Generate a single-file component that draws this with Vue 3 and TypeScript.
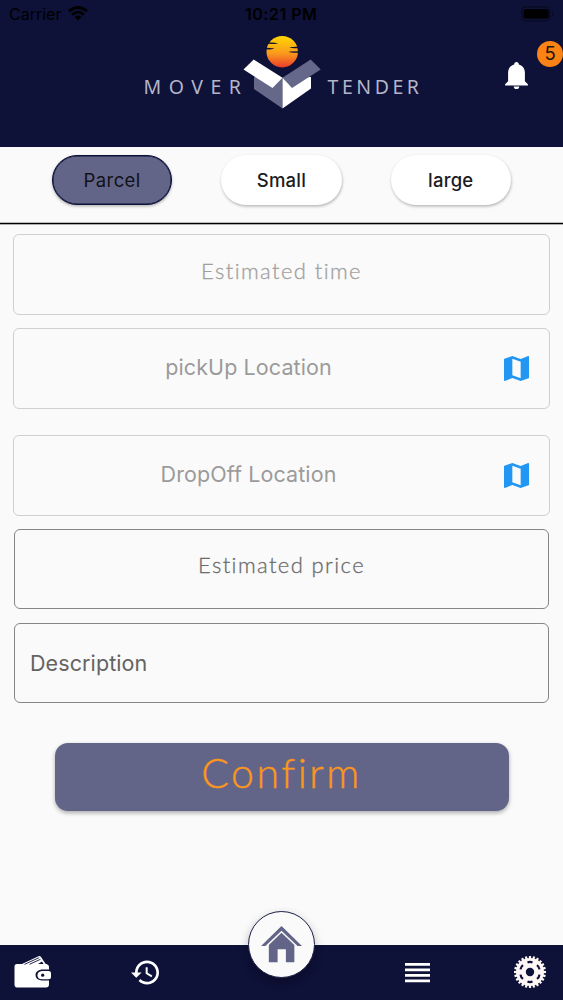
<script setup lang="ts">
import { ref } from 'vue'

interface Field {
  label: string
  kind: string
  map?: boolean
}

const sizes: string[] = ['Parcel', 'Small', 'large']
const selected = ref<string>('Parcel')

const fields: Field[] = [
  { label: 'Estimated time', kind: 'time' },
  { label: 'pickUp Location', kind: 'pickup', map: true },
  { label: 'DropOff Location', kind: 'dropoff', map: true },
  { label: 'Estimated price', kind: 'price' },
  { label: 'Description', kind: 'description' },
]
const notifications = ref<number>(5)
const teeth: number[] = Array.from({ length: 24 }, (_, i) => i * 15)
const slots: number[] = [0, 60, 120, 180, 240, 300]
</script>

<template>
  <div class="screen">
    <header class="header">
      <div class="status">
        <span class="carrier">Carrier</span>
        <svg class="wifi" width="20" height="15" viewBox="0 0 20 15">
          <g fill="none" stroke="#000" stroke-width="2.7">
            <path d="M1 5.2Q10-2.2 19 5.2" />
            <path d="M4.1 8.7Q10 3.6 15.9 8.7" />
          </g>
          <path d="M6.7 11Q10 8.2 13.3 11L10 14.6Z" />
        </svg>
        <span class="clock">10:21 PM</span>
        <svg class="battery" width="34" height="16" viewBox="0 0 34 16">
          <rect x=".8" y=".8" width="28" height="14" rx="4" fill="none" stroke="#090b22" stroke-width="1.2" />
          <rect x="2.6" y="2.9" width="25" height="9.8" rx="2.4" />
          <path d="M31 5.6q1.6.4 1.6 2.3T31 10.2z" fill="#090b22" />
        </svg>
      </div>
      <svg class="logo" width="280" height="80" viewBox="142 32 280 80">
        <defs>
          <linearGradient id="sun" x1="0" y1="0" x2="0" y2="1">
            <stop offset="0" stop-color="#ffd800" />
            <stop offset=".55" stop-color="#fa9a1c" />
            <stop offset="1" stop-color="#ea3c2c" />
          </linearGradient>
        </defs>
        <text x="143.500" y="93.800" textLength="97.500">MOVER</text>
        <text x="327.500" y="93.800" textLength="91.500">TENDER</text>
        <circle cx="282.200" cy="51.700" r="15.700" fill="url(#sun)" />
        <g fill="#0e1138">
          <path d="M267.200 42.300L275 42.800l3.200.7-4.200.6-8.500-.3Z" />
          <path d="M266 47.800L273 48.200l1.300.6-4.500.6-5-.2Z" />
          <path d="M298 46.500L290.500 47.200l-1 .5 5 .5h5Z" />
          <path d="M298.500 51.200L290 51.500l-1.300.6 4 .6h6Z" />
        </g>
        <path fill="#656888" d="M254 77L282.500 77.500V108.500L254 89Z" />
        <path fill="#fff" d="M282.500 78L311 77V88.500L282.500 108.500Z" />
        <path fill="#fff" d="M253.700 59.500L282.500 77.800L272.500 88L243.500 69.500Z" />
        <path fill="#656888" d="M310.700 59.500L320.700 69.500L292 88L282.500 77.800Z" />
      </svg>
      <svg class="bell" width="23" height="28" viewBox="0 0 23 28">
        <path fill="#fff" d="M11.500 0c1.500 0 2.300 1 2.300 2.500 4 1 6.100 4.300 6.100 8.600v8.200l3 2.900v1.200H.1v-1.200l3-2.900v-8.200C3.100 6.800 5.200 3.500 9.200 2.500 9.200 1 10 0 11.500 0zM8.700 24.400h5.600c0 1.600-1.200 2.700-2.800 2.700s-2.800-1.100-2.800-2.700z" />
      </svg>
      <span class="badge">{{ notifications }}</span>
    </header>

    <div class="sizes">
      <button
        v-for="size in sizes"
        :key="size"
        class="chip"
        :class="{ active: size === selected }"
        @click="selected = size"
      >{{ size }}</button>
    </div>

    <main class="form">
      <div v-for="field in fields" :key="field.kind" class="field" :class="field.kind">
        <span class="label">{{ field.label }}</span>
        <svg v-if="field.map" class="map" width="25" height="25" viewBox="3 3 18 18">
          <path fill="#2196f3" d="M20.500 3l-.16.030L15 5.100 9 3 3.360 4.900c-.21.070-.36.250-.36.480V20.500c0 .28.220.5.500.5l.16-.030L9 18.900l6 2.100 5.640-1.900c.21-.070.360-.25.360-.48V3.500c0-.28-.22-.5-.5-.5zM15 19l-6-2.110V5l6 2.110V19z" />
        </svg>
      </div>
      <button class="confirm"><span>Confirm</span></button>
    </main>

    <nav class="nav">
      <svg class="wallet" width="38" height="34" viewBox="0 0 38 34">
        <path fill="#fff" d="M3 9H8L24.500 1.200Q26 .6 27 2L31.500 8.800Q35 9.500 35 12V14.500H27.500Q21.500 15.500 21.500 20T27.500 25.500H35V29.500Q35 32.500 32 32.500H3Q.5 32.500 .5 29.500V11.500Q.5 9 3 9Z" />
        <path fill="none" stroke="#0e1138" stroke-width=".9" d="M10.500 9.400L25.200 2.600M15.500 9.300L26.500 4.300" />
        <path fill="#0e1138" d="M24 8.900L28 6.500L29.500 8.900Z" />
        <path fill="#fff" d="M28 16H34.500Q37 16 37 18V22.500Q37 24.300 34.500 24.300H28Q23.500 24 23.500 20.200T28 16Z" />
        <circle cx="28.700" cy="20.200" r="1.600" fill="#0e1138" />
      </svg>
      <svg class="history" width="28" height="25" viewBox="1 3 21 18">
        <path fill="#fff" d="M13 3c-4.970 0-9 4.030-9 9H1l3.890 3.890.07.140L9 12H6c0-3.870 3.130-7 7-7s7 3.130 7 7-3.130 7-7 7c-1.930 0-3.680-.79-4.940-2.060l-1.420 1.420C8.270 19.990 10.510 21 13 21c4.970 0 9-4.030 9-9s-4.030-9-9-9zm-1 5v5l4.280 2.540.72-1.210-3.500-2.080V8H12z" />
      </svg>
      <div class="home">
        <svg width="41" height="37" viewBox="0 0 42 38">
          <path fill="#626587" d="M21 0L42 20.500H37.500L21 5L4.500 20.500H0ZM21 7L34.200 19.500V37.300H25.500V24H17V37.300H8V19.500Z" />
        </svg>
      </div>
      <svg class="menu" width="25" height="20" viewBox="0 0 25 20">
        <path fill="#fff" d="M0 0h25v2.800H0zM0 5.500h25v2.800H0zM0 11h25v2.800H0zM0 16.500h25v2.800H0z" />
      </svg>
      <svg class="gear" width="34" height="34" viewBox="-17 -17 34 34">
        <rect v-for="a in teeth" :key="a" x="-1.100" y="-16" width="2.200" height="4" fill="#fff6f6" :transform="`rotate(${a})`" />
        <circle r="14" fill="#fff6f6" />
        <circle r="4.200" fill="#0e1138" />
        <path v-for="a in slots" :key="'s' + a" d="M-2.500-9.500Q0-10.600 2.500-9.500" fill="none" stroke="#0e1138" stroke-width="2.200" :transform="`rotate(${a})`" />
      </svg>
    </nav>
  </div>
</template>

<style>
body {
  margin: 0;
}
</style>

<style scoped>
.screen {
  width: 563px;
  height: 1000px;
  display: flex;
  flex-direction: column;
  background: #fafafa;
  overflow: hidden;
  font-family: Inter, "Liberation Sans", sans-serif;
}
.header {
  position: relative;
  height: 147px;
  flex: none;
  background: #0e1138;
}
.status {
  display: flex;
  align-items: center;
  height: 28px;
  padding: 0 8px 0 9px;
  color: #000;
}
.carrier {
  font-size: 16px;
  letter-spacing: 0;
  width: 59px;
  line-height: 28px;
}
.wifi {
  margin-top: -2px;
}
.clock {
  margin-left: 157px;
  width: 76px;
  font-size: 16px;
  font-weight: 600;
  letter-spacing: 0.500px;
  white-space: nowrap;
}
.battery {
  margin-left: auto;
}
.logo {
  display: block;
  margin: 4px 0 0 142px;
}
.logo text {
  font-family: "Noto Sans", sans-serif;
  font-size: 19.500px;
  fill: #b3b5c8;
}
.bell {
  position: absolute;
  left: 505px;
  top: 62px;
}
.badge {
  position: absolute;
  left: 537px;
  top: 41px;
  width: 26px;
  height: 26px;
  border-radius: 50%;
  background: #fb8214;
  color: #21150f;
  font-size: 18.500px;
  line-height: 25px;
  text-align: center;
}
.sizes {
  box-sizing: border-box;
  height: 77px;
  flex: none;
  display: flex;
  gap: 49px;
  padding: 8px 0 0 52px;
  border-bottom: 1px solid #000;
  box-shadow: 0 1px rgba(0, 0, 0, 0.3), inset 0 -1px rgba(0, 0, 0, 0.25);
}
.chip {
  box-sizing: border-box;
  width: 120.300px;
  height: 50px;
  padding: 0 0 1px;
  border: 0;
  border-radius: 25px;
  background: #fff;
  color: #1c1c1e;
  font: 500 18.500px Inter, sans-serif;
  letter-spacing: 0.200px;
  box-shadow: 0.500px 1.500px 3px rgba(0, 0, 0, 0.28);
}
.chip.active {
  background: #626587;
  border: 1px solid #0e1138;
  color: #111218;
  font-weight: 400;
  letter-spacing: 0.400px;
  box-shadow: inset 0 0 0 0.500px #0e1138, 0 1.500px 3px rgba(0, 0, 0, 0.28);
}
.form {
  flex: 1;
  display: flex;
  flex-direction: column;
  padding: 10px 13px 0;
}
.field {
  box-sizing: border-box;
  height: 81px;
  flex: none;
  display: flex;
  align-items: center;
  justify-content: center;
  position: relative;
  border: 1px solid #cfcfcf;
  border-radius: 6px;
  color: #9b9b9b;
  font-size: 21.500px;
  letter-spacing: 0.100px;
  margin-bottom: 13px;
}
.label {
  white-space: nowrap;
}
.time .label,
.price .label {
  font-family: Lato, sans-serif;
  font-weight: 300;
  font-size: 22px;
  letter-spacing: 1.400px;
  margin-top: -9px;
  -webkit-text-stroke: 0.300px currentColor;
}
.time .label {
  color: #a0a0a0;
}
.pickup .label,
.dropoff .label {
  margin: -4px 66px 0 0;
}
.pickup {
  margin-bottom: 26px;
}
.price,
.description {
  height: 80px;
  border-color: #868686;
  color: #636363;
  margin: 0 1px 14px;
}
.price .label {
  color: #6b6b6b;
}
.description {
  justify-content: flex-start;
  padding: 0 0 1px 15px;
  margin-bottom: 40px;
}
.map {
  position: absolute;
  right: 20px;
  top: 27px;
}
.confirm {
  width: 454px;
  height: 68px;
  margin-left: 41.500px;
  padding: 0 0 8px;
  border: 0;
  border-radius: 13px;
  background: #626587;
  color: #fb961e;
  font: 300 41px/60px Lato, sans-serif;
  letter-spacing: 2.500px;
  -webkit-text-stroke: 0.400px currentColor;
  box-shadow: 0 2px 4px rgba(0, 0, 0, 0.32);
}
.nav {
  position: relative;
  height: 55px;
  flex: none;
  display: flex;
  align-items: center;
  background: #0e1138;
}
.wallet {
  margin: -1px 0 0 13.500px;
}
.history {
  margin-left: 79.500px;
}
.home {
  position: absolute;
  left: 248px;
  top: -34px;
  box-sizing: border-box;
  width: 67px;
  height: 67px;
  border: 1px solid #1c2046;
  border-radius: 50%;
  background: #fafafa;
  display: flex;
  align-items: center;
  justify-content: center;
  box-shadow: 0 4px 10px rgba(0, 0, 0, 0.28);
}
.menu {
  margin-left: 246px;
}
.gear {
  margin: -2px 0 0 83px;
}
</style>
